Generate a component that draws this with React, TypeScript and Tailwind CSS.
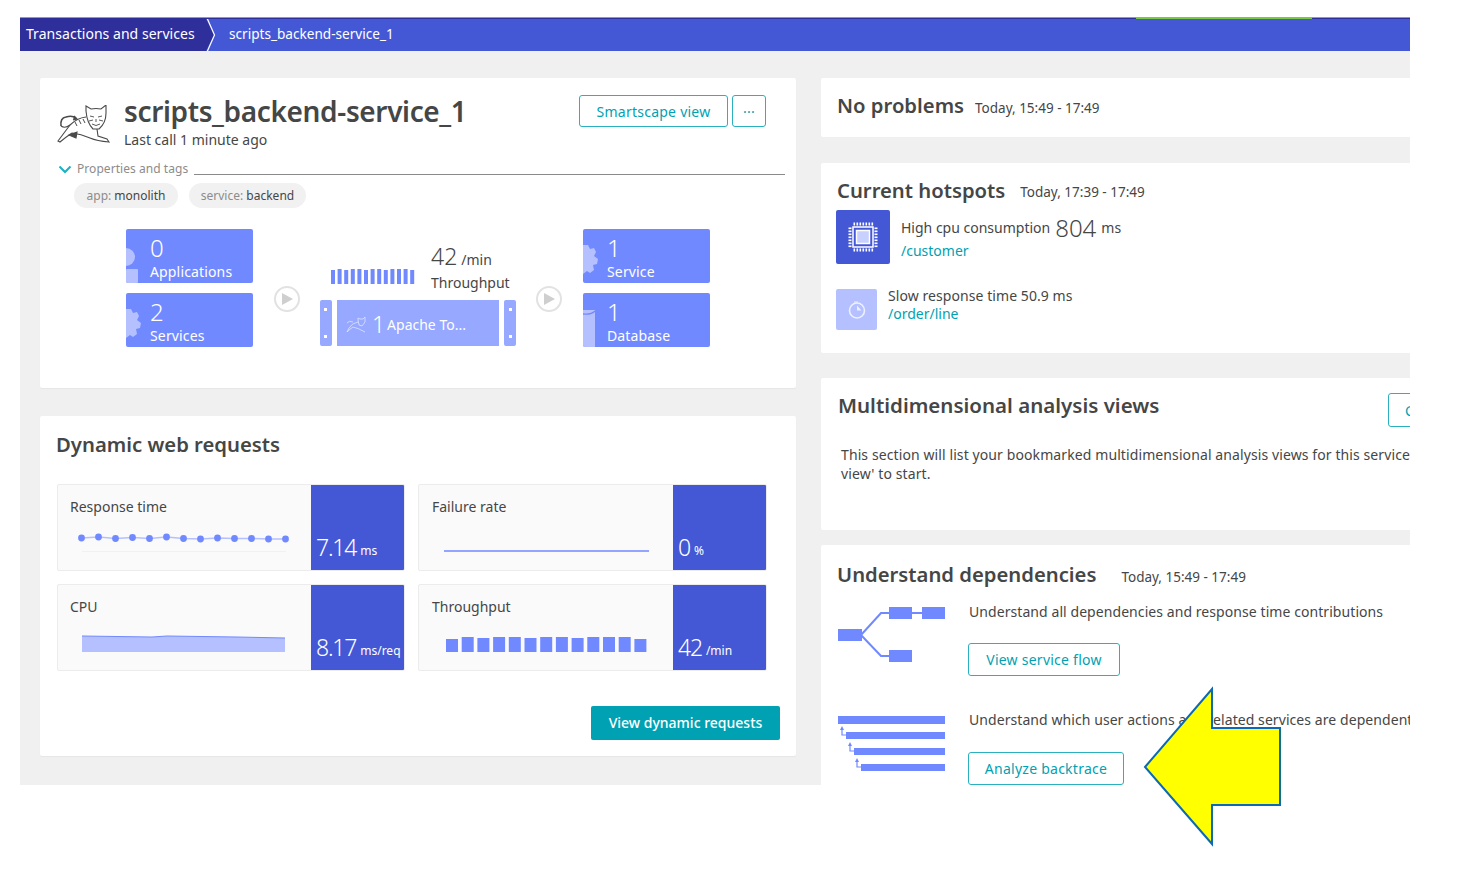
import type { ReactNode } from 'react';

const BLUE = '#7189ff';
const PALE = '#b4c0ff';

function TomcatLogo() {
  return (
    <svg width="54" height="40" viewBox="0 0 54 40" fill="none" stroke="#4a4a4a" strokeWidth="1.1" className="shrink-0">
      <path d="M29 6 L29 1 L34 4 Q39 3 44 4 L49 0 L49 8 Q49 18 42 24 L36 24 Q30 18 29 6 Z" fill="#fff" />
      <path d="M33 11 L37 12 M41 12 L45 11 M39 14 L39 17 M35 19 Q39 22 43 19 M36 15 L32 16 M42 15 L46 16" strokeWidth="0.9" />
      <path d="M29 12 Q20 13 13 20 Q7 28 1 36 L3 37 Q9 32 15 28" />
      <path d="M4 21 Q3 13 9 12 Q15 10 19 13" strokeWidth="1.6" />
      <path d="M17 11 L20 14 L16 15" fill="#4a4a4a" />
      <path d="M4 21 Q8 24 13 20" />
      <path d="M15 28 Q24 29 33 33 Q40 36 52 37 L50 34 L41 31 L40 24" />
      <path d="M12 30 L20 27 L19 33 Z" fill="#4a4a4a" />
      <path d="M18 17 L20 21 M22 15 L24 19 M26 14 L28 18" strokeWidth="1" />
    </svg>
  );
}

function AppsShape() {
  return (
    <svg width="14" height="54" viewBox="0 0 14 54" className="absolute left-0 top-0">
      <circle cx="0" cy="28" r="9" fill={PALE} />
      <rect x="0" y="40" width="12" height="14" rx="1" fill={PALE} />
    </svg>
  );
}

function GearShape() {
  return (
    <svg width="20" height="54" viewBox="0 0 20 54" className="absolute left-0 top-0">
      <path
        d="M0 16 L5 16 L7 20 L11 19 L13 23 L11 27 L15 30 L14 35 L10 36 L11 41 L7 44 L4 42 L0 45 Z"
        fill={PALE}
      />
    </svg>
  );
}

function DbShape() {
  return (
    <svg width="16" height="54" viewBox="0 0 16 54" className="absolute left-0 top-0">
      <path d="M0 17 L12 17 L12 54 L0 54 Z" fill={PALE} />
      <path d="M0 21 Q8 22 12 18" stroke={BLUE} strokeWidth="1.3" fill="none" />
    </svg>
  );
}

function Tile({ count, label, shape }: { count: string; label: string; shape: ReactNode }) {
  return (
    <div className="relative h-[54px] w-[127px] overflow-hidden rounded-[2px] bg-[#7189ff] pl-6 pt-[4px] text-white">
      {shape}
      <div className="text-[24px] font-light leading-[29px]">{count}</div>
      <div className="text-[14px] leading-[19px] tracking-[0.15px]">{label}</div>
    </div>
  );
}

function PlayCircle() {
  return (
    <div className="mt-[57px] flex h-[26px] w-[26px] shrink-0 items-center justify-center rounded-full border-2 border-[#e2e2e2] bg-white">
      <svg width="12" height="12" viewBox="0 0 12 12">
        <path d="M1 0 L12 6 L1 12 Z" fill="#cfcfcf" />
      </svg>
    </div>
  );
}

function OutlineButton({ children, className }: { children: ReactNode; className: string }) {
  return (
    <div className={`flex items-center justify-center rounded-[3px] border border-[#2ab0bf] text-[14px] tracking-[0.25px] text-[#00a1b2] ${className}`}>
      {children}
    </div>
  );
}

function MetricCard({ title, value, unit, width, inset, chart }: { title: string; value: string; unit: string; width: string; inset: string; chart: ReactNode }) {
  return (
    <div className={`flex h-[87px] overflow-hidden rounded-[2px] border border-[#ececec] bg-[#fafafa] ${width}`}>
      <div className={`relative flex-1 pt-[12px] text-[14px] leading-[20px] text-[#454646] ${inset}`}>
        {title}
        {chart}
      </div>
      <div className="flex w-[93px] shrink-0 items-end gap-[4px] bg-[#4458d6] pb-[8px] pl-[5px] text-white">
        <span className="text-[23px] font-light leading-[30px] tracking-[-1.2px]">{value}</span>
        <span className="pb-[3px] text-[12px] leading-[16px]">{unit}</span>
      </div>
    </div>
  );
}

const dotYs = [52, 51, 52.5, 51.5, 52.5, 51, 52.5, 53, 52, 52.5, 52.5, 53, 53];
const throughputTops = [2, 0, 1, 0, 0, 1, 0, 0, 1, 0, 0, 0, 2];

function ResponseChart() {
  return (
    <svg width="240" height="86" className="absolute left-0 top-[1px]">
      <path d="M24 65.5 H228" stroke="#eef0fb" strokeWidth="1" />
      <path
        d={dotYs.map((y, i) => `${i === 0 ? 'M' : 'L'}${23.5 + i * 17} ${y}`).join(' ')}
        stroke={PALE}
        strokeWidth="1.4"
        fill="none"
      />
      {dotYs.map((y, i) => (
        <circle key={i} cx={23.5 + i * 17} cy={y} r="3.4" fill={BLUE} />
      ))}
    </svg>
  );
}

function FailureChart() {
  return (
    <svg width="240" height="86" className="absolute left-0 top-[1px]">
      <path d="M25 65 H230" stroke={BLUE} strokeWidth="1.6" />
    </svg>
  );
}

function CpuChart() {
  return (
    <svg width="240" height="86" className="absolute left-0 top-[1px]">
      <path d="M24 50 L94 51 L109 50 L179 51 L227 52 L227 66 L24 66 Z" fill={PALE} />
      <path d="M24 50 L94 51 L109 50 L179 51 L227 52" stroke={BLUE} strokeWidth="1" fill="none" />
    </svg>
  );
}

function ThroughputChart() {
  return (
    <svg width="240" height="86" className="absolute left-0 top-[1px]">
      {throughputTops.map((t, i) => (
        <rect key={i} x={27 + i * 15.7} y={51 + t} width="12" height={15 - t} fill={BLUE} />
      ))}
    </svg>
  );
}

function CpuIcon() {
  const ticks = [0, 1, 2, 3, 4, 5, 6];
  return (
    <svg width="30" height="30" viewBox="0 0 30 30" fill="none">
      <rect x="5" y="5" width="20" height="20" stroke="#fff" strokeWidth="1.5" />
      <rect x="8.5" y="8.5" width="13" height="13" fill="#c8d0ff" stroke="#fff" strokeWidth="1.5" />
      {ticks.map((i) => (
        <g key={i} fill="#fff">
          <rect x={5.5 + i * 3} y="0.5" width="1.6" height="3" />
          <rect x={5.5 + i * 3} y="26.5" width="1.6" height="3" />
          <rect x="0.5" y={5.5 + i * 3} width="3" height="1.6" />
          <rect x="26.5" y={5.5 + i * 3} width="3" height="1.6" />
        </g>
      ))}
    </svg>
  );
}

function ClockIcon() {
  return (
    <svg width="20" height="20" viewBox="0 0 20 20" fill="none">
      <circle cx="10" cy="10.5" r="7.5" stroke="#eef0ff" strokeWidth="1.6" />
      <path d="M7 2 H11" stroke="#eef0ff" strokeWidth="1.2" />
      <path d="M10 10.5 L10 5.5 L14.5 10.5 Z" fill="#eef0ff" />
    </svg>
  );
}

function FlowIcon() {
  return (
    <svg width="108" height="56" viewBox="0 0 108 56" fill="none">
      <rect x="0" y="22" width="24" height="12" fill={BLUE} />
      <rect x="51" y="0" width="23" height="12" fill={BLUE} />
      <rect x="84" y="0" width="23" height="12" fill={BLUE} />
      <rect x="51" y="43" width="23" height="12" fill={BLUE} />
      <path d="M23 28 L43 6 H51 M74 6 H84 M23 28 L43 49 H51" stroke={BLUE} strokeWidth="2" />
    </svg>
  );
}

function BacktraceIcon() {
  return (
    <svg width="108" height="57" viewBox="0 0 108 57" fill="none">
      <rect x="0" y="0" width="107" height="8" fill={BLUE} />
      <rect x="8" y="16" width="99" height="7" fill={BLUE} />
      <rect x="16" y="32" width="91" height="7" fill={BLUE} />
      <rect x="23" y="48" width="84" height="7" fill={BLUE} />
      <path d="M4 13 V19 H8 M12 29 V35 H16 M19 45 V51 H23" stroke={BLUE} strokeWidth="1.2" />
      <path d="M2 14 L4 10 L6 14 Z M10 30 L12 26 L14 30 Z M17 46 L19 42 L21 46 Z" fill={BLUE} />
    </svg>
  );
}

function BigArrow() {
  return (
    <svg width="170" height="180" viewBox="0 0 170 180" className="absolute left-[1125px] top-[670px]">
      <path d="M20 97 L87 19 L87 58 L155 58 L155 135 L87 135 L87 174 Z" fill="#ffff00" stroke="#0b69b7" strokeWidth="2" />
    </svg>
  );
}

function RackStrip() {
  return (
    <div className="flex w-[12px] flex-col items-center justify-between rounded-[2px] bg-[#96a8ff] py-[8px]">
      <div className="h-[3px] w-[3px] bg-white" />
      <div className="h-[3px] w-[3px] bg-white" />
    </div>
  );
}

export default function App() {
  return (
    <div className="relative h-[887px] w-[1483px] overflow-hidden bg-white font-['Noto_Sans',sans-serif] text-[#454646]">
      <div className="ml-5 mt-[17px] w-[1390px]">
        <div className="flex h-[2px]">
          <div className="w-[1116px] border-t border-[#9a9a9a] bg-[#2f2f9b]" />
          <div className="w-[176px] bg-[#7ac943]" />
          <div className="flex-1 border-t border-[#9a9a9a] bg-[#2f2f9b]" />
        </div>

        {/* breadcrumb */}
        <div className="flex h-[32px] items-center bg-[#4458d6] text-white">
          <div className="flex h-full w-[186px] items-center bg-[#2f2f9b] pb-[3px] pl-[6px] text-[14px] tracking-[0.04px]">Transactions and services</div>
          <svg width="10" height="32" viewBox="0 0 10 32" className="shrink-0">
            <path d="M0 0 L8 16 L0 32 Z" fill="#2f2f9b" />
            <path d="M1 -1 L8.5 16 L1 33" stroke="#fff" strokeWidth="1.2" fill="none" />
          </svg>
          <div className="pb-[2px] pl-[13px] text-[13.6px]">scripts_backend-service_1</div>
        </div>

        {/* body */}
        <div className="flex h-[734px] items-start bg-[#f0f0f0] pl-5 pt-[27px]">
          <div className="flex w-[756px] shrink-0 flex-col gap-[28px]">
            <section className="h-[310px] rounded-[2px] bg-white pl-[17px] pt-[17px] shadow-[0_1px_1px_#e6e6e6]">
              <div className="flex items-start">
                <div className="pt-[10px]"><TomcatLogo /></div>
                <div className="ml-[13px] w-[455px]">
                  <div className="-mt-px text-[28px] font-semibold leading-[34px] tracking-[-0.36px] text-[#454646]">scripts_backend-service_1</div>
                  <div className="text-[14px] leading-[24px]">Last call 1 minute ago</div>
                </div>
                <OutlineButton className="h-[32px] w-[149px]">Smartscape view</OutlineButton>
                <OutlineButton className="ml-[4px] h-[32px] w-[34px] text-[11px]">···</OutlineButton>
              </div>
              <div className="mt-[8px] flex items-center">
                <svg width="14" height="9" viewBox="0 0 14 9" className="ml-[1px] shrink-0" fill="none">
                  <path d="M1.5 1.5 L7 7 L12.5 1.5" stroke="#19b1c4" strokeWidth="2" />
                </svg>
                <span className="ml-[5px] text-[12px] leading-[18px] tracking-[0.05px] text-[#8c8c8c]">Properties and tags</span>
                <div className="ml-[6px] mt-[11px] h-px w-[591px] bg-[#8a8a8a]" />
              </div>
              <div className="ml-[17px] mt-[5px] flex gap-[11px] text-[12px]">
                <div className="flex h-[25px] w-[104px] items-center justify-center rounded-full bg-[#f1f1f1]">
                  <span className="text-[#8c8c8c]">app:&nbsp;</span>monolith
                </div>
                <div className="flex h-[25px] w-[117px] items-center justify-center rounded-full bg-[#f1f1f1]">
                  <span className="text-[#8c8c8c]">service:&nbsp;</span>backend
                </div>
              </div>

              {/* service topology */}
              <div className="ml-[69px] mt-[21px] flex items-start">
                <div className="flex flex-col gap-[10px]">
                  <Tile count="0" label="Applications" shape={<AppsShape />} />
                  <Tile count="2" label="Services" shape={<GearShape />} />
                </div>
                <div className="ml-[21px]"><PlayCircle /></div>
                <div className="ml-[20px] w-[196px]">
                  <div className="flex h-[71px] items-end">
                    <svg width="84" height="18" viewBox="0 0 84 18" className="mb-[15px] ml-[11px] shrink-0">
                      {[1, 0, 1, 0, 0, 1, 0, 0, 1, 0, 0, 0, 1].map((t, i) => (
                        <rect key={i} x={i * 6.6} y={2 + t} width="4" height={15 - t} fill={BLUE} />
                      ))}
                    </svg>
                    <div className="ml-[16px] pb-[5px]">
                      <div className="leading-[23px]">
                        <span className="text-[23px] font-light">42</span>
                        <span className="ml-[4px] text-[14px]">/min</span>
                      </div>
                      <div className="text-[14px] leading-[24px]">Throughput</div>
                    </div>
                  </div>
                  <div className="flex h-[46px] gap-[5px]">
                    <RackStrip />
                    <div className="flex w-[163px] items-center bg-[#96a8ff] pl-[9px] pt-[3px] text-white">
                      <svg width="20" height="16" viewBox="0 0 20 16" fill="none" stroke="#dfe4ff" strokeWidth="0.8">
                        <path d="M12 3 L12 1 L14 2 L17 2 L19 0 L19 5 L16 9 L13 8 Z M12 5 Q6 6 3 11 L1 15 Q4 12 7 10 Q12 11 19 15 M1 6 Q3 3 7 5" />
                      </svg>
                      <span className="ml-[6px] text-[23px] font-light leading-none">1</span>
                      <span className="ml-[2px] text-[14px]">Apache To...</span>
                    </div>
                    <RackStrip />
                  </div>
                </div>
                <div className="ml-[20px]"><PlayCircle /></div>
                <div className="ml-[21px] flex flex-col gap-[10px]">
                  <Tile count="1" label="Service" shape={<GearShape />} />
                  <Tile count="1" label="Database" shape={<DbShape />} />
                </div>
              </div>
            </section>

            <section className="h-[340px] rounded-[2px] bg-white pl-[17px] pt-[13px] shadow-[0_1px_1px_#e6e6e6]">
              <h2 className="-ml-px text-[20.3px] font-semibold leading-[30px]">Dynamic web requests</h2>
              <div className="mt-[25px] grid w-[710px] grid-cols-[348px_349px] gap-x-[13px] gap-y-[13px]">
                <MetricCard title="Response time" value="7.14" unit="ms" width="w-[348px]" inset="pl-[12px]" chart={<ResponseChart />} />
                <MetricCard title="Failure rate" value="0" unit="%" width="w-[349px]" inset="pl-[13px]" chart={<FailureChart />} />
                <MetricCard title="CPU" value="8.17" unit="ms/req" width="w-[348px]" inset="pl-[12px]" chart={<CpuChart />} />
                <MetricCard title="Throughput" value="42" unit="/min" width="w-[349px]" inset="pl-[13px]" chart={<ThroughputChart />} />
              </div>
              <div className="ml-[534px] mt-[35px] flex h-[34px] w-[189px] items-center justify-center rounded-[2px] bg-[#00a1b2] pb-[1px] text-[14px] font-medium text-white">
                View dynamic requests
              </div>
            </section>
          </div>

          <div className="ml-[25px] w-[589px] shrink-0">
            <section className="flex h-[59px] items-center overflow-hidden rounded-l-[2px] bg-white pb-[5px] pl-[16px]">
              <h2 className="text-[20.25px] font-semibold leading-[30px]">No problems</h2>
              <span className="ml-[11px] pt-[6px] text-[13.5px]">Today, 15:49 - 17:49</span>
            </section>

            <section className="mt-[26px] h-[190px] overflow-hidden rounded-l-[2px] bg-white pl-[16px] pt-[12px]">
              <div className="flex items-center">
                <h2 className="text-[20.25px] font-semibold leading-[30px]">Current hotspots</h2>
                <span className="ml-[15px] pt-[5px] text-[13.5px]">Today, 17:39 - 17:49</span>
              </div>
              <div className="-ml-px mt-[5px] flex items-center">
                <div className="flex h-[54px] w-[54px] items-center justify-center rounded-[2px] bg-[#4458d6]"><CpuIcon /></div>
                <div className="ml-[11px]">
                  <div className="flex items-center pt-[1px] text-[14px] leading-[27px]">
                    High cpu consumption
                    <span className="ml-[5px] text-[24px] font-light">804</span>
                    <span className="ml-[5px]">ms</span>
                  </div>
                  <div className="text-[14px] leading-[20px] text-[#00a1b2]">/customer</div>
                </div>
              </div>
              <div className="-ml-px mt-[23px] flex items-center">
                <div className="flex h-[41px] w-[41px] items-center justify-center rounded-[2px] bg-[#b4c0ff]"><ClockIcon /></div>
                <div className="ml-[11px] pb-[9px] text-[14px] leading-[18px]">
                  <div className="tracking-[0.07px]">Slow response time 50.9 ms</div>
                  <div className="text-[#00a1b2]">/order/line</div>
                </div>
              </div>
            </section>

            <section className="mt-[25px] h-[152px] overflow-hidden rounded-l-[2px] bg-white pl-[17px] pt-[12px]">
              <div className="flex items-start">
                <h2 className="w-[550px] shrink-0 text-[20.5px] font-semibold leading-[30px]">Multidimensional analysis views</h2>
                <OutlineButton className="mt-[3px] h-[34px] w-[60px] shrink-0 justify-start pl-[16px]">Create</OutlineButton>
              </div>
              <p className="ml-[3px] mt-[18px] whitespace-nowrap text-[14px] leading-[19px] tracking-[0.1px]">
                This section will list your bookmarked multidimensional analysis views for this service. Click 'Create analysis
                <br />
                view' to start.
              </p>
            </section>

            <section className="mt-[15px] h-[300px] overflow-hidden rounded-l-[2px] bg-white pl-[16px] pt-[14px]">
              <div className="flex items-center">
                <h2 className="text-[20.25px] font-semibold leading-[30px]">Understand dependencies</h2>
                <span className="ml-[25px] pt-[6px] text-[13.5px]">Today, 15:49 - 17:49</span>
              </div>
              <div className="mt-[18px] flex items-start">
                <div className="ml-[1px] w-[131px] shrink-0"><FlowIcon /></div>
                <div className="-mt-[5px]">
                  <div className="whitespace-nowrap text-[14px] leading-[20px] tracking-[0.07px]">Understand all dependencies and response time contributions</div>
                  <OutlineButton className="-ml-px mt-[21px] h-[33px] w-[152px]">View service flow</OutlineButton>
                </div>
              </div>
              <div className="mt-[40px] flex items-start">
                <div className="ml-[1px] w-[131px] shrink-0"><BacktraceIcon /></div>
                <div className="-mt-[6px]">
                  <div className="whitespace-nowrap text-[14px] leading-[20px] tracking-[0.07px]">Understand which user actions and related services are dependent on this service</div>
                  <OutlineButton className="-ml-px mt-[22px] h-[33px] w-[156px]">Analyze backtrace</OutlineButton>
                </div>
              </div>
            </section>
          </div>
        </div>
      </div>
      <BigArrow />
    </div>
  );
}
